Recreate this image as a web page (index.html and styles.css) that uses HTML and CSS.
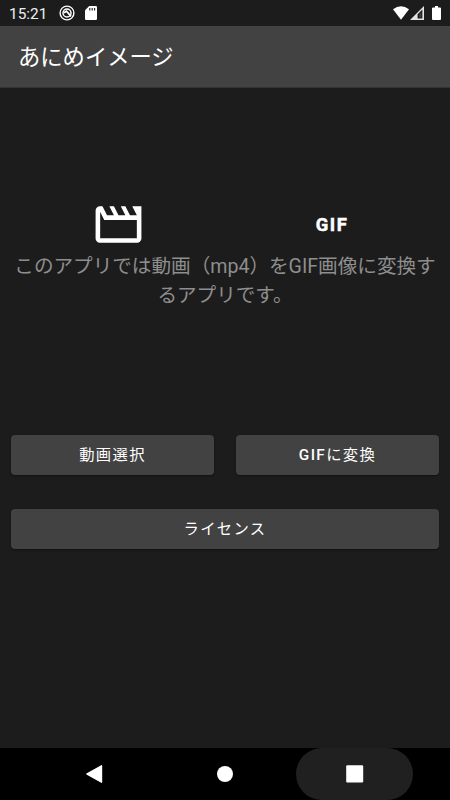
FILE: index.html
```
<!DOCTYPE html>
<html lang="ja">
<head>
<meta charset="UTF-8">
<meta name="viewport" content="width=device-width, initial-scale=1.0">
<title>あにめイメージ</title>
<link rel="stylesheet" href="styles.css">
</head>
<body>

<div class="status-bar">
  <span class="clock">15:21</span>
  <svg class="app-icon" viewBox="0 0 16 16">
    <circle cx="8" cy="8" r="6.9" fill="none" stroke="#fff" stroke-width="1.4"/>
    <circle cx="8" cy="8" r="4" fill="none" stroke="#fff" stroke-width="1.5"/>
    <path d="M5 7.8L7.5 6.2L12 11.4" fill="none" stroke="#fff" stroke-width="1.7"/>
  </svg>
  <svg class="sd-icon" viewBox="0 0 12 14">
    <path fill="#fff" d="M4.2 0H10.8Q12 0 12 1.2V12.8Q12 14 10.8 14H1.2Q0 14 0 12.8V4.2Z"/>
    <path stroke="#1c1c1c" stroke-width="1.1" d="M4.8 2v2.6M7.2 2v2.6M9.6 2v2.6"/>
  </svg>
  <svg class="system-icons" viewBox="0 0 50 15">
    <path fill="#fff" d="M0 3.3Q8 -2.6 16 3.3L8 13.8Z"/>
    <path fill="#e4e4e4" d="M17 14L31 0V14Z"/>
    <path fill="#1c1c1c" d="M24.6 8.2L29.4 3.6V12.6H24.6Z"/>
    <path fill="#ddd" d="M26.4 8.2L28.3 6.3V11.5H26.4Z" opacity=".2"/>
    <path fill="#fff" d="M42 0h3v1.4h2q1 0 1 1V13q0 1-1 1h-7q-1 0-1-1V2.4q0-1 1-1h2Z"/>
  </svg>
</div>

<header class="app-bar">
  <h1>あにめイメージ</h1>
</header>

<main>
  <div class="icons">
    <div class="icon-cell">
      <svg viewBox="0 0 24 24">
        <path fill="#fff" d="M18 4l2 4h-3l-2-4h-2l2 4h-3l-2-4H8l2 4H7L5 4H4c-1.1 0-1.99.9-1.99 2L2 18c0 1.1.9 2 2 2h16c1.1 0 2-.9 2-2V4h-4zM4 18V6.47L5.76 10H20v8H4z"/>
      </svg>
    </div>
    <div class="icon-cell">
      <svg class="gif" viewBox="0 0 55 55">
        <text x="10.8" y="34.2">GIF</text>
      </svg>
    </div>
  </div>
  <p class="description">このアプリでは動画（mp4）をGIF画像に変換するアプリです。</p>
  <div class="buttons">
    <button>動画選択</button>
    <button><b>GIF</b>に変換</button>
    <button class="wide">ライセンス</button>
  </div>
</main>

<nav class="nav-bar">
  <div class="nav-item">
    <svg viewBox="0 0 18 18"><path fill="#fff" d="M.8 8.3L15.2.2Q16.2-.2 16.2.8V17.2Q16.2 18.2 15.2 17.8L.8 9.7Q-.5 9 .8 8.3Z"/></svg>
  </div>
  <div class="nav-item">
    <svg viewBox="0 0 18 18"><circle cx="9" cy="9" r="8" fill="#fff"/></svg>
  </div>
  <div class="nav-item pressed">
    <svg viewBox="0 0 18 18"><rect x=".2" y=".2" width="17" height="17.2" rx="1.2" fill="#fff"/></svg>
  </div>
</nav>

</body>
</html>
```
FILE: styles.css
```
* {
  box-sizing: border-box;
}

body {
  margin: 0;
  height: 100vh;
  display: flex;
  flex-direction: column;
  overflow: hidden;
  background-color: #1c1c1c;
  color: #fff;
  font-family: Roboto, "Noto Sans CJK JP", sans-serif;
}

.status-bar {
  height: 26px;
  display: flex;
  align-items: center;
  padding: 0 7px 0 9px;
}

.clock {
  width: 50px;
  padding-top: 2px;
  font-size: 15.4px;
  color: #eee;
}

.app-icon {
  width: 16px;
  height: 16px;
}

.sd-icon {
  width: 12px;
  height: 14px;
  margin-left: 10px;
}

.system-icons {
  width: 50px;
  height: 15px;
  margin-left: auto;
}

.app-bar {
  height: 62px;
  display: flex;
  align-items: center;
  padding: 0 0 4px 18px;
  background-color: #424242;
  border-bottom: 1px solid #333;
}

h1 {
  margin: 0;
  font-size: 22.3px;
  font-weight: 400;
}

main {
  flex: 1;
  padding: 109px 11px 0;
}

.icons {
  display: grid;
  grid-template-columns: 1fr 1fr;
  height: 55px;
}

.icon-cell {
  display: flex;
  align-items: center;
  justify-content: center;
}

.icon-cell svg {
  width: 55px;
  height: 55px;
}

.gif text {
  fill: #fff;
  stroke: #fff;
  stroke-width: 0.5px;
  font-size: 18.4px;
  font-weight: 700;
  letter-spacing: 1.5px;
}

.description {
  margin: 0;
  height: 182.5px;
  font-size: 19.6px;
  line-height: 29px;
  text-align: center;
  color: #8e8e8e;
}

.buttons {
  display: grid;
  grid-template-columns: 1fr 1fr;
  gap: 34px 22px;
}

button {
  height: 40px;
  padding: 0 0 3px;
  border: none;
  border-radius: 4px;
  background-color: #424242;
  box-shadow: 0 1px 2px rgba(0, 0, 0, 0.4);
  color: #fff;
  font-family: inherit;
  font-size: 15.3px;
  font-weight: 400;
  letter-spacing: 1.37px;
}

button b {
  font-weight: 500;
}

.wide {
  grid-column: span 2;
}

.nav-bar {
  height: 52px;
  display: flex;
  justify-content: center;
  gap: 13px;
  padding-right: 1px;
  background-color: #000;
}

.nav-item {
  width: 117px;
  display: flex;
  align-items: center;
  justify-content: center;
}

.nav-item svg {
  width: 18px;
  height: 18px;
}

.pressed {
  border-radius: 26px;
  background-color: #202020;
}
```
